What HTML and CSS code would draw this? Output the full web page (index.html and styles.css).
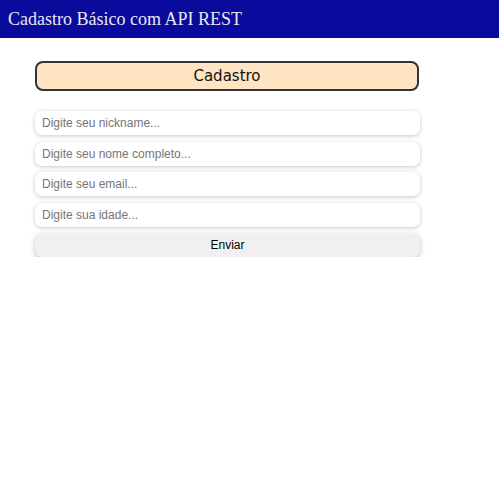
FILE: index.html
```html
<!DOCTYPE html>
<html lang="pt-BR">
<head>
<meta charset="utf-8">
<title>Cadastro Básico com API REST</title>
<link rel="stylesheet" href="styles.css">
</head>
<body>
<header class="topbar">
  <h1 class="topbar-title">Cadastro Básico com API REST</h1>
</header>
<main class="content">
  <div class="panel-title">Cadastro</div>
  <form class="form">
    <input class="field" type="text" placeholder="Digite seu nickname...">
    <input class="field" type="text" placeholder="Digite seu nome completo...">
    <input class="field" type="email" placeholder="Digite seu email...">
    <input class="field" type="number" placeholder="Digite sua idade...">
    <button class="submit" type="button">Enviar</button>
  </form>
</main>
</body>
</html>
```
FILE: styles.css
```css
html, body {
  margin: 0;
  padding: 0;
  background: #ffffff;
}
.topbar {
  background: #0a0a9c;
  height: 38px;
  display: flex;
  align-items: center;
  padding: 0 8px;
}
.topbar-title {
  margin: 0;
  font-family: "Liberation Serif", "Times New Roman", serif;
  font-weight: normal;
  font-size: 18px;
  color: #e8e8f4;
}
.content {
  width: 385px;
  margin: 23px 0 0 35px;
}
.panel-title {
  box-sizing: border-box;
  height: 30px;
  border: 2px solid #333333;
  border-radius: 8px;
  background: #ffe4c4;
  font-family: "DejaVu Sans", Verdana, sans-serif;
  font-size: 15px;
  color: #111111;
  display: flex;
  align-items: center;
  justify-content: center;
  width: 384px;
}
.form {
  display: flex;
  flex-direction: column;
  gap: 6.5px;
  margin-top: 20px;
}
.field, .submit {
  box-sizing: border-box;
  height: 24px;
  border: none;
  border-radius: 7px;
  box-shadow: 0 1px 4px rgba(0, 0, 0, 0.22);
  font-family: "Liberation Sans", Arial, sans-serif;
  font-size: 12px;
  padding: 0 7px;
  margin: 0;
  width: 385px;
  outline: none;
}
.field {
  background: #ffffff;
  color: #222;
}
.field::placeholder {
  color: #757575;
}
.field::-webkit-outer-spin-button,
.field::-webkit-inner-spin-button {
  -webkit-appearance: none;
  margin: 0;
}
.submit {
  background: #f0f0f0;
  color: #000;
  text-align: center;
  box-shadow: 0 2px 5px rgba(0, 0, 0, 0.25);
}
```
